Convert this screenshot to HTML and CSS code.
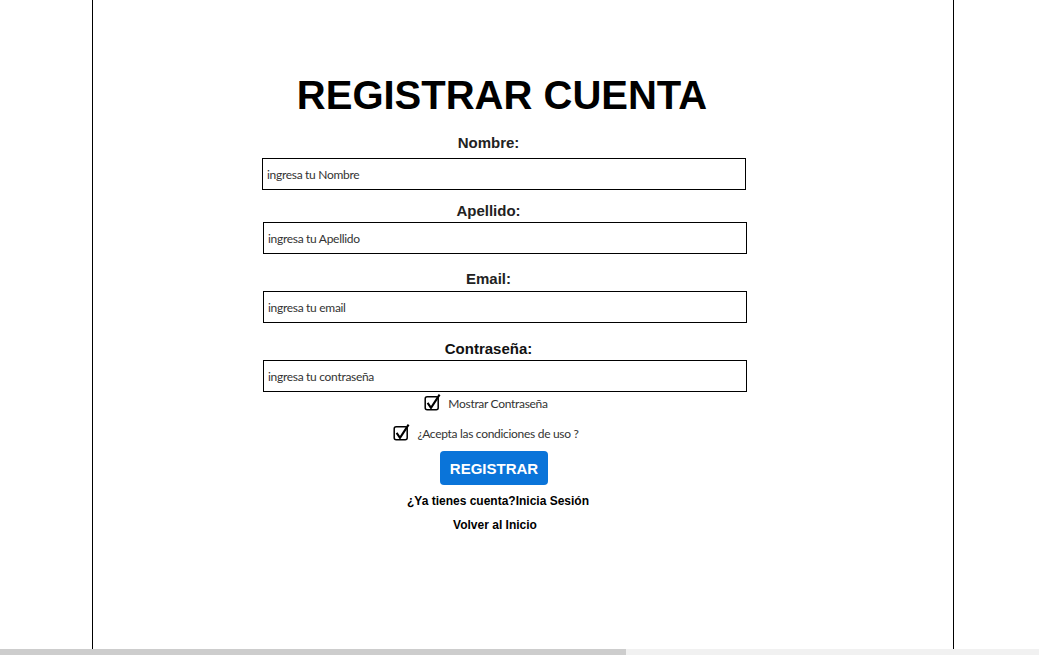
FILE: index.html
```html
<!DOCTYPE html>
<html lang="es">
<head>
<meta charset="utf-8">
<title>Registrar Cuenta</title>
<link rel="stylesheet" href="styles.css">
</head>
<body>
<main class="page">
  <form class="form">
    <h1 class="title">REGISTRAR CUENTA</h1>

    <label class="label label-first" for="nombre">Nombre:</label>
    <input class="field field-first" id="nombre" type="text" placeholder="ingresa tu Nombre">

    <label class="label label-apellido" for="apellido">Apellido:</label>
    <input class="field" id="apellido" type="text" placeholder="ingresa tu Apellido">

    <label class="label label-email" for="email">Email:</label>
    <input class="field" id="email" type="email" placeholder="ingresa tu email">

    <label class="label label-pass" for="pass">Contraseña:</label>
    <input class="field" id="pass" type="password" placeholder="ingresa tu contraseña">

    <label class="check check-show">
      <svg class="check-icon" width="18" height="18" viewBox="0 0 18 18" aria-hidden="true">
        <rect x="1.2" y="2.7" width="13" height="13" rx="2" fill="none" stroke="#000" stroke-width="1.5"/>
        <path d="M3.6 8.8 L7 13.8 L15.6 0.6" fill="none" stroke="#000" stroke-width="2.1" stroke-linejoin="miter"/>
      </svg>
      <span>Mostrar Contraseña</span>
    </label>

    <label class="check check-terms">
      <svg class="check-icon" width="18" height="18" viewBox="0 0 18 18" aria-hidden="true">
        <rect x="1.2" y="2.7" width="13" height="13" rx="2" fill="none" stroke="#000" stroke-width="1.5"/>
        <path d="M3.6 8.8 L7 13.8 L15.6 0.6" fill="none" stroke="#000" stroke-width="2.1" stroke-linejoin="miter"/>
      </svg>
      <span>¿Acepta las condiciones de uso ?</span>
    </label>

    <div class="actions">
      <button class="btn" type="button">REGISTRAR</button>
    </div>

    <p class="link link-login"><a href="#">¿Ya tienes cuenta?Inicia Sesión</a></p>
    <p class="link link-home"><a href="#">Volver al Inicio</a></p>
  </form>
</main>
<div class="hscroll" aria-hidden="true"><div class="hscroll-thumb"></div></div>
</body>
</html>
```

FILE: styles.css
```css
html, body {
  margin: 0;
  padding: 0;
  background: #fff;
}

body {
  font-family: "Liberation Sans", Arial, sans-serif;
  color: #000;
  overflow: hidden;
}

.page {
  box-sizing: border-box;
  margin-left: 92px;
  width: 862px;
  min-height: 100vh;
  border-left: 1px solid #000;
  border-right: 1px solid #000;
  padding-top: 71px;
}

.form {
  width: 484px;
  margin-left: 170px;
  display: flex;
  flex-direction: column;
}

.title {
  margin: 0;
  font-size: 40px;
  line-height: 48px;
  font-weight: bold;
  text-align: center;
  padding-right: 6px;
  color: #000;
}

.label {
  display: block;
  font-size: 15px;
  line-height: 18px;
  font-weight: bold;
  color: #222;
  text-align: center;
  padding-right: 33px;
}

.label-first { margin-top: 15px; margin-bottom: 6px; }
.label-apellido { margin-top: 12px; margin-bottom: 2px; }
.label-email { margin-top: 16px; margin-bottom: 3px; }
.label-pass { margin-top: 17px; margin-bottom: 2px; color: #111; }

.field {
  box-sizing: border-box;
  width: 484px;
  height: 32px;
  margin: 0;
  padding: 0 4px;
  border: 1px solid #000;
  border-radius: 0;
  font-family: Lato, "Liberation Sans", sans-serif;
  font-size: 12px;
  letter-spacing: -0.3px;
  color: #333;
  background: #fff;
  outline: none;
}

.field-first {
  margin-left: -1px;
}

.field::placeholder {
  color: #333;
  opacity: 1;
}

.check {
  display: flex;
  align-items: center;
  justify-content: center;
  gap: 6px;
  height: 18px;
  font-family: Lato, "Liberation Sans", sans-serif;
  font-size: 12px;
  letter-spacing: -0.3px;
  color: #333;
  padding-right: 38px;
}

.check-show { margin-top: 2px; }
.check-terms { margin-top: 12px; }

.check-icon {
  display: block;
  overflow: visible;
  flex: none;
}

.actions {
  display: flex;
  justify-content: center;
  margin-top: 9px;
  padding-right: 22px;
}

.btn {
  width: 108px;
  height: 34px;
  border: none;
  border-radius: 4px;
  background: #0a74d9;
  color: #fff;
  font-family: "Liberation Sans", Arial, sans-serif;
  font-size: 15px;
  font-weight: bold;
  padding: 0;
}

.link {
  margin: 0;
  text-align: center;
  font-size: 12px;
  line-height: 14px;
  font-weight: bold;
}

.link a {
  color: #000;
  text-decoration: none;
}

.link-login { margin-top: 9px; padding-right: 14px; }
.link-home { margin-top: 10px; padding-right: 20px; }

.hscroll {
  position: fixed;
  left: 0;
  right: 0;
  bottom: 0;
  height: 6px;
  background: #f1f1f1;
}

.hscroll-thumb {
  width: 626px;
  height: 100%;
  background: #cdcdcd;
}
```
